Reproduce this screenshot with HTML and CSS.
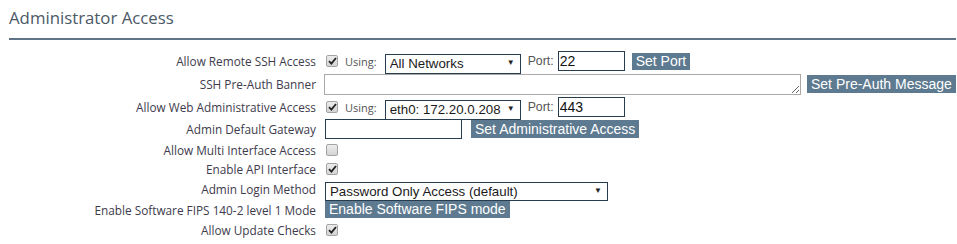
FILE: index.html
```html
<!DOCTYPE html>
<html>
<head>
    <meta charset="UTF-8">
    <title>Administrator Access</title>
    <link rel="stylesheet" href="styles.css">
</head>
<body>
<h2 class="title">Administrator Access</h2>
<form id="adminForm" class="form">
    <div class="row r22">
        <label class="lbl">Allow Remote SSH Access</label>
        <div class="ctl">
            <span class="check on"><svg width="9" height="8" viewBox="0 0 9 8"><path d="M1 4.2 L3.4 6.6 L8 1" fill="none" stroke="#222" stroke-width="1.8"/></svg></span>
            <span class="using">Using:</span>
            <span class="sel w136"><select><option>All Networks</option></select></span>
            <span class="port">Port:</span>
            <input class="txt w67" type="text" value="22">
            <button class="button">Set Port</button>
        </div>
    </div>
    <div class="row r24">
        <label class="lbl">SSH Pre-Auth Banner</label>
        <div class="ctl">
            <textarea class="banner"></textarea>
            <button class="button b18">Set Pre-Auth Message</button>
        </div>
    </div>
    <div class="row r22">
        <label class="lbl">Allow Web Administrative Access</label>
        <div class="ctl">
            <span class="check on"><svg width="9" height="8" viewBox="0 0 9 8"><path d="M1 4.2 L3.4 6.6 L8 1" fill="none" stroke="#222" stroke-width="1.8"/></svg></span>
            <span class="using">Using:</span>
            <span class="sel w136"><select><option>eth0: 172.20.0.208</option></select></span>
            <span class="port">Port:</span>
            <input class="txt w67" type="text" value="443">
        </div>
    </div>
    <div class="row r22">
        <label class="lbl">Admin Default Gateway</label>
        <div class="ctl">
            <input class="txt w137" type="text">
            <button class="button b18 gap9">Set Administrative Access</button>
        </div>
    </div>
    <div class="row r19">
        <label class="lbl">Allow Multi Interface Access</label>
        <div class="ctl"><span class="check"></span></div>
    </div>
    <div class="row r19">
        <label class="lbl">Enable API Interface</label>
        <div class="ctl">
            <span class="check on"><svg width="9" height="8" viewBox="0 0 9 8"><path d="M1 4.2 L3.4 6.6 L8 1" fill="none" stroke="#222" stroke-width="1.8"/></svg></span>
        </div>
    </div>
    <div class="row r21">
        <label class="lbl">Admin Login Method</label>
        <div class="ctl">
            <span class="sel w283 h19"><select><option>Password Only Access (default)</option></select></span>
        </div>
    </div>
    <div class="row r21">
        <label class="lbl">Enable Software FIPS 140-2 level 1 Mode</label>
        <div class="ctl">
            <button class="button">Enable Software FIPS mode</button>
        </div>
    </div>
    <div class="row r19">
        <label class="lbl">Allow Update Checks</label>
        <div class="ctl">
            <span class="check on"><svg width="9" height="8" viewBox="0 0 9 8"><path d="M1 4.2 L3.4 6.6 L8 1" fill="none" stroke="#222" stroke-width="1.8"/></svg></span>
        </div>
    </div>
</form>
</body>
</html>
```

FILE: styles.css
```css
body {
    margin: 0;
    background-color: #ffffff;
    font-family: "Open Sans", Arial, sans-serif;
}
.title {
    margin: 0 1px 0 9px;
    padding: 7px 0 9px 0;
    font-size: 16.8px;
    font-weight: normal;
    color: #4b5966;
    border-bottom: 2px solid #5f7486;
    height: 22px;
    line-height: 22px;
}
.form {
    margin-top: 10px;
}
.row {
    display: flex;
    align-items: center;
}
.r19 { height: 19px; }
.r21 { height: 21px; }
.r22 { height: 22px; }
.r24 { height: 24px; }
.lbl {
    flex-shrink: 0;
    width: 316px;
    padding-right: 9px;
    text-align: right;
    font-size: 11.8px;
    color: #3e3b4c;
    white-space: nowrap;
}
.ctl {
    display: flex;
    align-items: center;
}
.check {
    display: inline-flex;
    align-items: center;
    justify-content: center;
    width: 10px;
    height: 10px;
    border: 1px solid #a3a3a3;
    border-radius: 2px;
    background: linear-gradient(#ececec, #d4d4d4);
    margin-left: 1px;
}
.using {
    margin-left: 7px;
    font-size: 11px;
    color: #555;
}
.port {
    margin-left: 7px;
    margin-right: 4px;
    font-family: "Liberation Sans", Arial, sans-serif;
    font-size: 12.3px;
    color: #555;
}
.sel {
    position: relative;
    display: inline-block;
    flex-shrink: 0;
    margin-left: 8px;
    height: 20px;
}
.sel select {
    appearance: none;
    -webkit-appearance: none;
    width: 100%;
    height: 100%;
    box-sizing: border-box;
    border: 1px solid #283c50;
    border-radius: 0;
    background: #fff;
    padding: 0 0 0 4px;
    font-family: "Liberation Sans", Arial, sans-serif;
    font-size: 13.3px;
    color: #1a1a1a;
}
.sel::after {
    content: "\25BC";
    position: absolute;
    right: 6px;
    top: 5px;
    font-size: 8px;
    color: #222;
    pointer-events: none;
}
.row .ctl > .sel.w283 { margin-left: 0; }
.w136 { width: 136px; }
.w283 { width: 283px; }
.h19 { height: 19px; }
.txt {
    flex-shrink: 0;
    box-sizing: border-box;
    height: 20px;
    border: 1px solid #283c50;
    padding: 0 1px;
    font-family: "Liberation Sans", Arial, sans-serif;
    font-size: 14px;
    color: #111;
    outline: none;
}
.w67 { width: 67px; }
.w137 { width: 137px; }
.banner {
    flex-shrink: 0;
    box-sizing: border-box;
    width: 477px;
    height: 21px;
    margin: 0 0 0 -1px;
    border: 1px solid #a9a9a9;
    padding: 0;
    resize: both;
    vertical-align: middle;
}
.button {
    flex-shrink: 0;
    white-space: nowrap;
    margin-left: 7px;
    padding: 0 4px;
    height: 17px;
    font-family: "Liberation Sans", Arial, sans-serif;
    font-size: 14px;
    line-height: 17px;
    color: white;
    background-color: #5d7a90;
    border: none;
    border-radius: 0;
    cursor: pointer;
}
.b18 { height: 18px; line-height: 18px; }
.banner + .button { margin-left: 6px; }
.gap9 { margin-left: 9px; }
.row .ctl > .button:first-child { margin-left: 0; }
```
